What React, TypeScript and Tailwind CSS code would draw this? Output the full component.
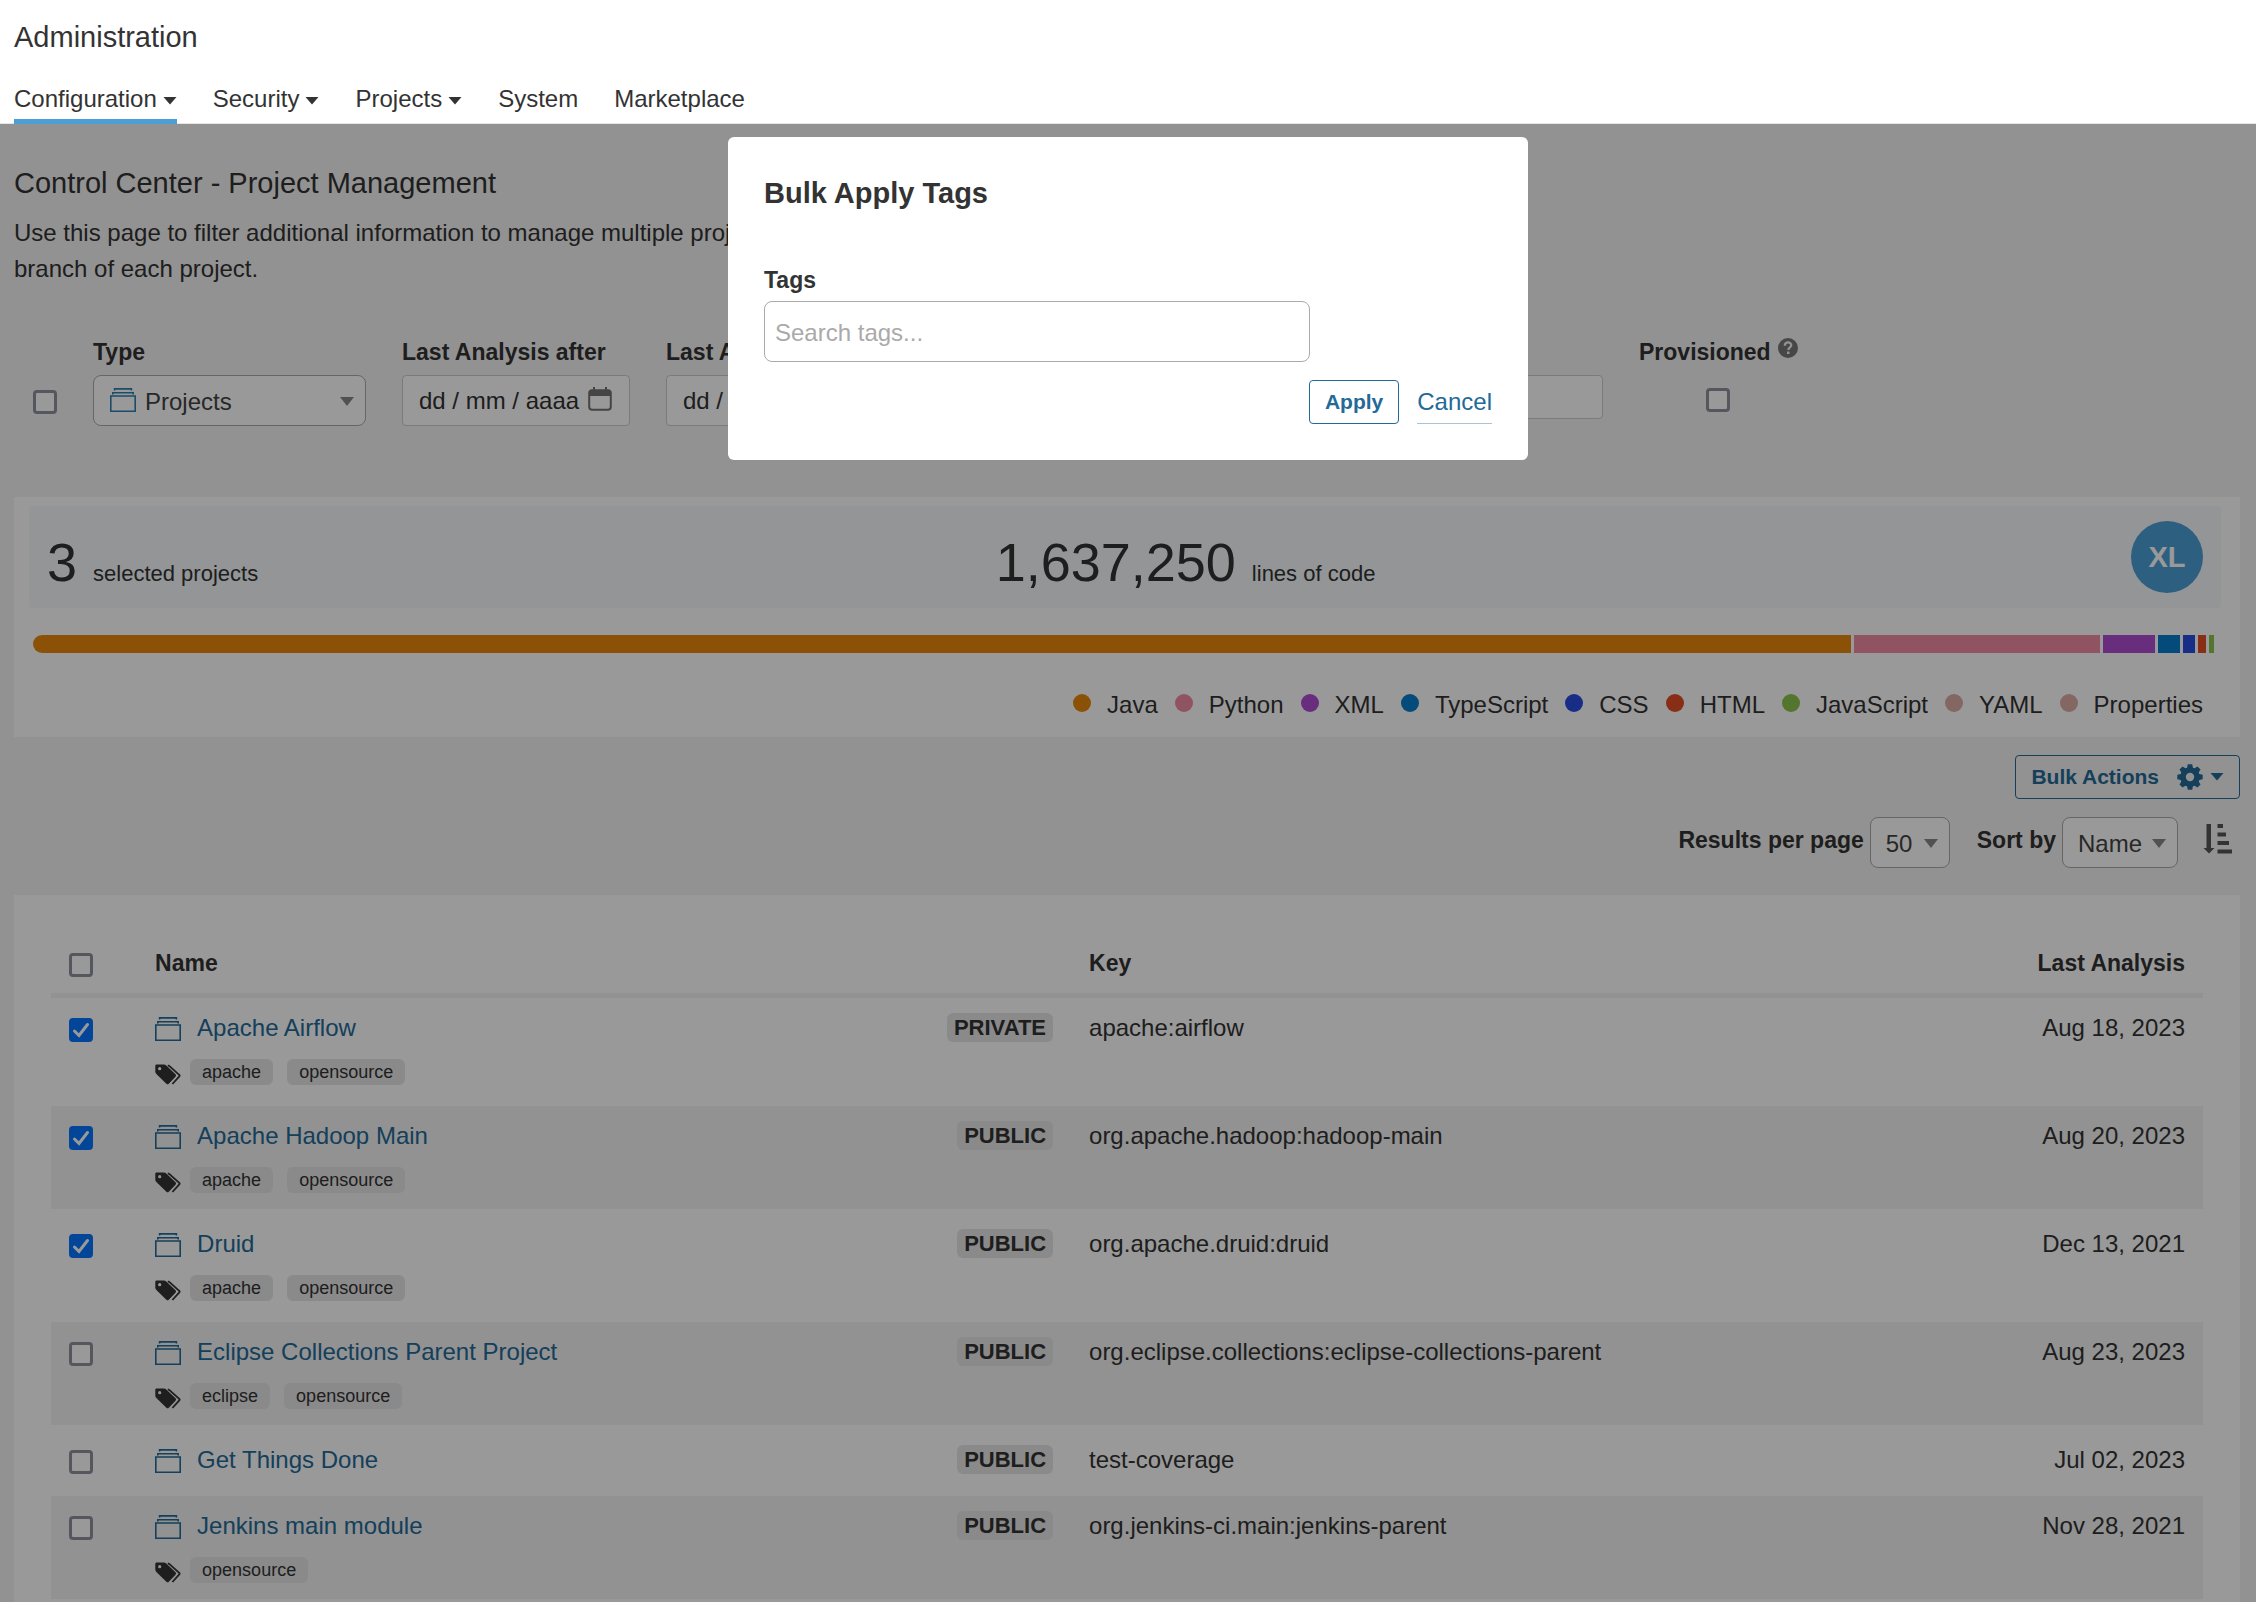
import React from "react";

const NAV = [
  { label: "Configuration", menu: true, active: true },
  { label: "Security", menu: true },
  { label: "Projects", menu: true },
  { label: "System" },
  { label: "Marketplace" },
];

const LANGUAGES = [
  { name: "Java", color: "#e8890c", share: 1819 },
  { name: "Python", color: "#ee8ba4", share: 246 },
  { name: "XML", color: "#af4cd0", share: 52 },
  { name: "TypeScript", color: "#077ccb", share: 22 },
  { name: "CSS", color: "#284be0", share: 12 },
  { name: "HTML", color: "#e34c26", share: 8 },
  { name: "JavaScript", color: "#8cc34b", share: 5 },
  { name: "YAML", color: "#dcaba4", share: 0 },
  { name: "Properties", color: "#dcaba4", share: 0 },
];

const PROJECTS = [
  { name: "Apache Airflow", visibility: "PRIVATE", key: "apache:airflow", date: "Aug 18, 2023", tags: ["apache", "opensource"], selected: true },
  { name: "Apache Hadoop Main", visibility: "PUBLIC", key: "org.apache.hadoop:hadoop-main", date: "Aug 20, 2023", tags: ["apache", "opensource"], selected: true },
  { name: "Druid", visibility: "PUBLIC", key: "org.apache.druid:druid", date: "Dec 13, 2021", tags: ["apache", "opensource"], selected: true },
  { name: "Eclipse Collections Parent Project", visibility: "PUBLIC", key: "org.eclipse.collections:eclipse-collections-parent", date: "Aug 23, 2023", tags: ["eclipse", "opensource"], selected: false },
  { name: "Get Things Done", visibility: "PUBLIC", key: "test-coverage", date: "Jul 02, 2023", tags: [], selected: false },
  { name: "Jenkins main module", visibility: "PUBLIC", key: "org.jenkins-ci.main:jenkins-parent", date: "Nov 28, 2021", tags: ["opensource"], selected: false },
];

function Caret({ className = "" }: { className?: string }) {
  return (
    <svg viewBox="0 0 14 8" className={className} aria-hidden="true">
      <path d="M0.5 0h13L7 7.6z" fill="currentColor" />
    </svg>
  );
}

function SelectArrow() {
  return (
    <svg viewBox="0 0 14 9" className="pointer-events-none absolute right-3 top-[22px] h-[9px] w-[14px] text-[#888]" aria-hidden="true">
      <path d="M0 0h14L7 9z" fill="currentColor" />
    </svg>
  );
}

function ProjectIcon({ className = "" }: { className?: string }) {
  return (
    <svg viewBox="0 0 26 24" className={"h-6 w-[26px] shrink-0 " + className} fill="none" stroke="currentColor" aria-hidden="true">
      <path d="M0.8 8h24.4v15.2H0.8z" strokeWidth="1.6" />
      <path d="M2.8 6.4V4.8h20.4v1.6" strokeWidth="1.6" />
      <path d="M4.6 2.6V0.9h16.8v1.7" strokeWidth="1.6" />
    </svg>
  );
}

function TagsIcon() {
  return (
    <svg viewBox="0 0 26 21" className="h-[21px] w-[26px] shrink-0 text-[#333]" aria-hidden="true">
      <path
        fill="currentColor"
        fillRule="evenodd"
        d="M1.600 0.500h7.200c.9 0 1.900.4 2.500 1l9.200 8.800c.7.700.7 1.700 0 2.400l-6.700 7c-.7.700-1.700.700-2.400 0l-9.800-9.500C.9 9.500.3 8.600.3 7.800V1.900c0-.8.5-1.400 1.300-1.400zM4.700 3.100a1.600 1.600 0 1 0 0 3.200A1.600 1.600 0 0 0 4.700 3.100z"
      />
      <path
        d="M12.800 1.300c.6.100 1.200.4 1.700.9l9.700 8.600c.6.500.6 1.100.1 1.600l-6.900 7.600"
        fill="none"
        stroke="currentColor"
        strokeWidth="1.800"
      />
    </svg>
  );
}

function GearIcon() {
  return (
    <svg viewBox="-13 -13 26 26" className="h-[26px] w-[26px]" aria-hidden="true" fill="currentColor">
      {[0, 45, 90, 135, 180, 225, 270, 315].map((angle) => (
        <path key={angle} transform={`rotate(${angle})`} d="M-3.200 -8L-2.200 -12.700H2.200L3.200 -8z" />
      ))}
      <circle r="7" fill="none" stroke="currentColor" strokeWidth="5.600" />
    </svg>
  );
}

function SortIcon() {
  return (
    <svg viewBox="0 0 29 30" className="h-[30px] w-[29px] text-[#555]" aria-hidden="true" fill="currentColor">
      <path d="M3.500 0h4.500v24h3.500L6 29.500.5 24h3z" />
      <path d="M14.500 0h5.500v4h-5.500zM14.500 8.500h8.500v4h-8.500zM14.500 17h11.500v4H14.500zM14.500 25.500h14.500v4H14.500z" />
    </svg>
  );
}

function CalendarIcon() {
  return (
    <svg viewBox="0 0 24 24" className="pointer-events-none absolute right-[18px] top-3 h-6 w-6 text-[#737373]" aria-hidden="true">
      <rect x="1.200" y="3.200" width="21.600" height="19.600" rx="3" fill="none" stroke="currentColor" strokeWidth="2" />
      <path d="M1 5a2 2 0 0 1 2-2h18a2 2 0 0 1 2 2v4H1zM5 0h2v4H5zM17 0h2v4h-2z" fill="currentColor" />
    </svg>
  );
}

function Checkbox({ label, checked = false }: { label: string; checked?: boolean }) {
  return (
    <span className="relative block h-6 w-6">
      <input
        type="checkbox"
        aria-label={label}
        defaultChecked={checked}
        className="peer block h-6 w-6 appearance-none rounded border-3 border-[#8f8f9d] bg-white checked:border-[#0675ff] checked:bg-[#0675ff]"
      />
      <svg viewBox="0 0 24 24" className="pointer-events-none absolute inset-0 hidden h-6 w-6 peer-checked:block" aria-hidden="true">
        <path d="M5.500 13l4.500 4.500L18.500 6.500" fill="none" stroke="#fff" strokeWidth="3" strokeLinecap="round" />
      </svg>
    </span>
  );
}

function DateField({ id, label }: { id: string; label: string }) {
  return (
    <div className="w-[228px]">
      <label htmlFor={id} className="block whitespace-nowrap text-[23px] font-bold leading-9">{label}</label>
      <div className="relative mt-[5px]">
        <input id={id} type="text" placeholder="dd / mm / aaaa" className="block h-[51px] w-full rounded-sm border border-[#cdcdcd] bg-white px-4 placeholder:text-[#333]" />
        <CalendarIcon />
      </div>
    </div>
  );
}

function Header() {
  return (
    <header className="bg-white px-3.5 pt-[17px] shadow-[inset_0_-1px_0_#e6e6e6]">
      <h1 className="text-[29px] leading-10">Administration</h1>
      <nav className="mt-6 flex gap-9">
        {NAV.map((item) => (
          <a
            key={item.label}
            href="#"
            className={"flex items-center gap-1.5 border-b-5 pb-0.5 " + (item.active ? "border-[#4b9fd5]" : "border-transparent")}
          >
            {item.label}
            {item.menu && <Caret className="mt-1 h-2 w-[14px]" />}
          </a>
        ))}
      </nav>
    </header>
  );
}

function Filters() {
  return (
    <form className="mt-[47px] flex items-start gap-9 pl-[19px]">
      <div className="mt-14">
        <Checkbox label="Select all projects" />
      </div>
      <div className="w-[273px]">
        <label htmlFor="type" className="block text-[23px] font-bold leading-9">Type</label>
        <div className="relative mt-[5px]">
          <ProjectIcon className="pointer-events-none absolute left-[17px] top-[13px] text-[#2f7fb0]" />
          <select id="type" className="block h-[51px] w-full appearance-none rounded-lg border border-[#aaa] bg-white pl-[51px] pt-0.5 text-[#444]">
            <option>Projects</option>
          </select>
          <SelectArrow />
        </div>
      </div>
      <DateField id="after" label="Last Analysis after" />
      <DateField id="before" label="Last Analysis before" />
      <div className="w-[673px]">
        <label htmlFor="search" className="block text-[23px] font-bold leading-9">Name or key</label>
        <input id="search" type="text" className="mt-[5px] block h-11 w-full rounded-sm border border-[#cdcdcd] bg-white px-3" />
      </div>
      <div>
        <div className="flex items-start gap-[7px] text-[23px] font-bold leading-9">
          Provisioned
          <svg viewBox="0 0 20 20" className="mt-1 h-5 w-5" aria-hidden="true">
            <circle cx="10" cy="10" r="10" fill="#777" />
            <path d="M6.800 7.800C6.800 5.600 8.200 4.400 10.100 4.400S13.300 5.600 13.300 7.200C13.300 9.400 10.300 9.400 10.300 12" fill="none" stroke="#f3f3f3" strokeWidth="2.200" />
            <path d="M9 13.500h2.500v2.500H9z" fill="#f3f3f3" />
          </svg>
        </div>
        <div className="mt-[18px] flex justify-center">
          <Checkbox label="Provisioned" />
        </div>
      </div>
    </form>
  );
}

function Summary() {
  return (
    <section className="mt-[71px] bg-white pb-3.5 pl-[15px] pr-[19px] pt-[9px]">
      <div className="flex h-[102px] items-center rounded bg-[#f5f9fc] px-[18px]">
        <p className="w-[44%] pt-[22px] text-[22px] leading-[72px]">
          <span className="mr-4 text-[54px]">3</span>selected projects
        </p>
        <p className="flex-1 pt-[22px] text-[22px] leading-[72px]">
          <span className="mr-4 text-[54px]">1,637,250</span>lines of code
        </p>
        <span className="flex size-[72px] items-center justify-center rounded-full bg-[#4b9fd5] text-[29px] font-bold text-white">XL</span>
      </div>
      <div className="mt-[27px] flex h-[18px] gap-[3px] overflow-hidden rounded-l-full pl-1 pr-[7px]">
        {LANGUAGES.filter((l) => l.share > 0).map((l) => (
          <div key={l.name} className="first:rounded-l-full" style={{ flex: `${l.share} 1 0`, backgroundColor: l.color }} />
        ))}
      </div>
      <ul className="mt-[34px] flex justify-end gap-[17px] pr-[18px]">
        {LANGUAGES.map((l) => (
          <li key={l.name} className="flex items-start gap-4">
            <span className="mt-[7px] size-[18px] rounded-full" style={{ backgroundColor: l.color }} />
            {l.name}
          </li>
        ))}
      </ul>
    </section>
  );
}

function Toolbar() {
  return (
    <div className="mt-[18px] flex flex-col items-end gap-[18px]">
      <button type="button" className="flex h-11 items-center rounded-sm border border-[#236a97] px-[15px] text-[21px] font-bold text-[#236a97]">
        Bulk Actions
        <span className="ml-[18px] mr-[7px]"><GearIcon /></span>
        <Caret className="h-2 w-[14px]" />
      </button>
      <div className="flex items-start">
        <label htmlFor="per-page" className="mt-[5px] text-[23px] font-bold leading-9">Results per page</label>
        <div className="relative ml-1.5 w-20">
          <select id="per-page" className="block h-[51px] w-full appearance-none rounded-lg border border-[#aaa] bg-white pl-[15px] pt-0.5 text-[#444]">
            <option>50</option>
          </select>
          <SelectArrow />
        </div>
        <label htmlFor="sort-by" className="ml-[27px] mt-[5px] text-[23px] font-bold leading-9">Sort by</label>
        <div className="relative ml-1.5 w-[116px]">
          <select id="sort-by" className="block h-[51px] w-full appearance-none rounded-lg border border-[#aaa] bg-white pl-[15px] pt-0.5 text-[#444]">
            <option>Name</option>
          </select>
          <SelectArrow />
        </div>
        <button type="button" aria-label="Sort ascending" className="ml-[17px] px-2 pt-[7px]"><SortIcon /></button>
      </div>
    </div>
  );
}

function ProjectTable() {
  return (
    <section className="mt-[27px] bg-white px-[37px] pt-[50px]">
      <table className="w-full table-fixed border-separate border-spacing-0">
        <thead>
          <tr className="text-left align-top text-[23px] leading-9 [&>th]:border-b-5 [&>th]:border-[#f3f3f3] [&>th]:px-[18px] [&>th]:pb-3">
            <th scope="col" className="w-[4%] pt-2"><Checkbox label="Select all" /></th>
            <th scope="col" className="w-[43.4%]">Name</th>
            <th scope="col">Key</th>
            <th scope="col" className="w-[12%] text-right">Last Analysis</th>
          </tr>
        </thead>
        <tbody>
          {PROJECTS.map((p) => (
            <tr key={p.name} className="align-top even:bg-[#f3f3f3] [&>td]:border-b-5 [&>td]:border-white [&>td]:px-[18px] [&>td]:pb-[13px] [&>td]:pt-3">
              <td>
                <div className="pt-2"><Checkbox label={`Select ${p.name}`} checked={p.selected} /></div>
              </td>
              <td>
                <div className="flex items-start justify-between">
                  <a href="#" className="flex items-start gap-4 text-[#236a97]">
                    <ProjectIcon className="mt-[7px]" />
                    {p.name}
                  </a>
                  <span className="mt-[3px] rounded-md bg-[#e6e6e6] px-[7px] text-[22px] font-bold leading-[29px]">{p.visibility}</span>
                </div>
                {p.tags.length > 0 && (
                  <div className="flex items-start pb-[3px] pt-[13px]">
                    <span className="mr-[9px] pt-[5px]"><TagsIcon /></span>
                    <ul className="flex gap-3.5">
                      {p.tags.map((t) => (
                        <li key={t} className="rounded-md bg-[#e6e6e6] px-3 text-lg leading-[26px]">{t}</li>
                      ))}
                    </ul>
                  </div>
                )}
              </td>
              <td>{p.key}</td>
              <td className="text-right">{p.date}</td>
            </tr>
          ))}
        </tbody>
      </table>
    </section>
  );
}

function BulkTagsDialog() {
  return (
    <div role="dialog" aria-labelledby="dialog-title" className="absolute left-1/2 top-[13px] w-[800px] -translate-x-1/2 rounded-md bg-white px-9 pb-9 pt-10">
      <h2 id="dialog-title" className="text-[29px] font-bold leading-8">Bulk Apply Tags</h2>
      <div className="mt-[53px] w-[546px]">
        <label htmlFor="tags" className="block text-[23px] font-bold leading-9">Tags</label>
        <input id="tags" type="text" placeholder="Search tags..." className="mt-[3px] block h-[61px] w-full rounded-lg border border-[#aaa] bg-white px-2.5 pt-0.5 placeholder:text-[#aaa]" />
      </div>
      <div className="mt-[18px] flex justify-end gap-[18px]">
        <button type="button" className="h-11 rounded-sm border border-[#236a97] px-[15px] text-[21px] font-bold text-[#236a97]">Apply</button>
        <button type="button" className="h-11 border-b border-[#a8c3d5] text-[#236a97]">Cancel</button>
      </div>
    </div>
  );
}

export default function App() {
  return (
    <div className="flex h-screen flex-col overflow-hidden font-['Liberation_Sans',Arial,sans-serif] text-2xl leading-9 text-[#333]">
      <Header />
      <main className="relative flex-1 overflow-hidden bg-[#f3f3f3] pl-3.5 pr-4 pt-[39px]">
        <h2 className="text-[29px] leading-10">Control Center - Project Management</h2>
        <p className="mt-3">
          Use this page to filter additional information to manage multiple projects at once. Lines of code are for the main
          <br />
          branch of each project.
        </p>
        <Filters />
        <Summary />
        <Toolbar />
        <ProjectTable />
        <div className="absolute inset-0 bg-black/40" />
        <BulkTagsDialog />
      </main>
    </div>
  );
}
